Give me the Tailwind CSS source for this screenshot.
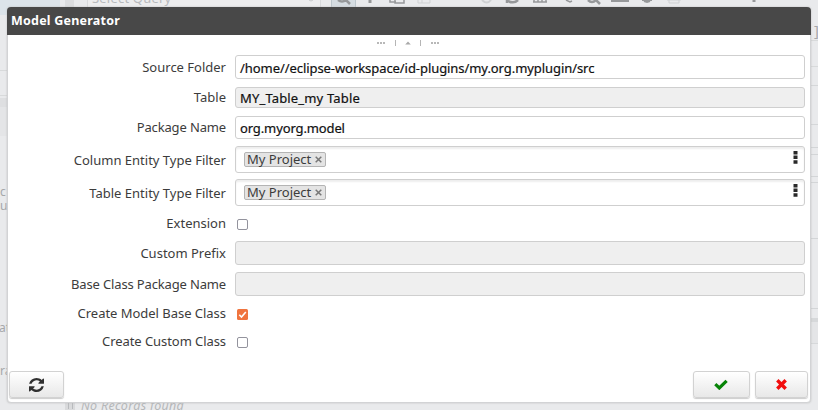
<!DOCTYPE html>
<html lang="en">
<head>
<meta charset="utf-8">
<title>Model Generator</title>
<script src="https://cdn.jsdelivr.net/npm/@tailwindcss/browser@4"></script>
</head>
<body class="relative h-[410px] w-[818px] overflow-hidden bg-[#e9eaec] font-['Noto_Sans','Open_Sans',sans-serif] text-[13px] text-[#3c3c3c]">
<!-- dimmed application behind the dialog -->
<div class="absolute inset-0 text-[#a5a7aa]" aria-hidden="true">
  <div class="absolute left-0 top-0 h-[15px] w-[60px] bg-[#dce4ea]"></div>
  <div class="absolute left-[65px] top-0 h-[15px] w-[9px] bg-[#dcdddf]"></div>
  <div class="absolute -top-[10px] left-[87px] h-[30px] w-[234px] border border-[#d9dadc] bg-[#ededee]"></div>
  <div class="absolute -top-[11px] left-[92px] leading-[18px] tracking-[0.2px] text-[#b8babd]">Select Query</div>
  <div class="absolute -top-px left-[331px] h-[12px] w-[25px] border border-[#bcc6cc] bg-[#d5dce1]"></div>
  <svg class="absolute left-0 top-0 h-[8px] w-[818px]" viewBox="0 0 818 8" fill="none" stroke="#96989a" stroke-width="2">
    <path d="M309 0l2 1 2-1" stroke="#c8cacc" stroke-width="1"/>
    <path d="M338 0q4 3 8 0M346 0l4 4" stroke-width="2.5"/>
    <path d="M370 0v3" stroke-width="3"/>
    <path d="M390 0v2h6M395 0v3h9V0" stroke-width="1.5"/>
    <path d="M418 0v3h12V0M422 0v3" stroke="#cfd1d3" stroke-width="1"/>
    <path d="M482 0q5 5 9 0" stroke="#cfd1d3"/>
    <path d="M507 3V0M508 1q6 3 10-1" stroke-width="2.5"/>
    <path d="M533 2h14M534 0v2M538 0v2M542 0v2M546 0v2" stroke-width="1.5"/>
    <path d="M566 0l4 2 2-1" stroke-width="1.5"/>
    <path d="M588 0q4 4 8 0M596 0l4 4" stroke-width="2.5"/>
    <path d="M612 0v1h16V0" stroke-width="2"/>
    <path d="M642 0h10M644 1l3 1 3-1" stroke-width="2"/>
    <path d="M667 0h14M669 0v3h10V0" stroke="#cfd1d3" stroke-width="1"/>
    <path d="M754 0v2" stroke-width="3"/>
  </svg>
  <div class="absolute left-0 top-[70px] h-[26px] w-[10px] border-y border-[#d8dadb]"></div>
  <div class="absolute left-0 top-[98px] h-[9px] w-[10px] bg-[#dedfe1]"></div>
  <div class="absolute left-0 top-[107px] h-[29px] w-[10px] bg-[#e4e5e7]"></div>
  <div class="absolute left-0 top-[185px] text-[12px] leading-[14px]">c</div>
  <div class="absolute -left-[3px] top-[199px] text-[12px] leading-[14px]">lu</div>
  <div class="absolute -left-px top-[320px] text-[12px] leading-[16px]">at</div>
  <div class="absolute left-0 top-[363px] text-[12px] leading-[16px]">ra</div>
  <div class="absolute left-[814px] top-[20px] text-[15px] leading-[20px]">]</div>
  <div class="absolute left-[808px] top-[40px] h-[27px] w-[10px] border-y border-[#d8dadb]"></div>
  <div class="absolute left-[808px] top-[85px] h-[40px] w-[10px] border-b border-t border-[#d5d7d9]"></div>
  <div class="absolute left-[808px] top-[147px] h-[8px] w-[10px] border-y border-[#d3d5d7]"></div>
  <div class="absolute left-[808px] top-[176px] h-[7px] w-[10px] border-y border-[#d3d5d7]"></div>
  <div class="absolute left-[808px] top-[238px] h-[71px] w-[10px] border-y border-[#d3d5d7]"></div>
  <div class="absolute left-[808px] top-[318px] h-[26px] w-[10px] border-b border-t-4 border-[#d6d8da] bg-[#e4e5e7]"></div>
  <div class="absolute left-[65px] top-[402px] h-[8px] w-[10px] bg-[#d9dadc]"></div>
  <div class="absolute left-[68px] top-[403px] h-[6px] w-[5px] border-x border-[#b8babd]"></div>
  <div class="absolute left-[81px] top-[397px] whitespace-nowrap text-[12.5px] italic leading-[18px] tracking-[0.28px] text-[#b5b7b9]">No Records found</div>
</div>

<main class="absolute left-[7px] top-[7px] flex h-[396px] w-[804px] flex-col rounded-[4px] border border-[#d2d3d5] bg-white shadow-[0_0_2px_#bbb]">
  <header class="-mx-px -mt-px flex h-[28px] shrink-0 items-center rounded-t-[4px] bg-[#484848] pl-1 pt-px text-[12.5px] font-bold text-white"><span class="tracking-[0.22px]">Model Generator</span></header>
  <div class="flex h-[16px] shrink-0 items-center justify-center gap-[13px] pr-[3px]">
    <svg class="h-2 w-2" viewBox="0 0 8 8" fill="#b8b8b8"><path d="M0 3h2v2H0zM3 3h2v2H3zM6 3h2v2H6z"/></svg>
    <i class="-ml-[3px] h-[6px] w-px bg-[#b5b5b5]"></i>
    <svg class="-mx-[5px] h-2 w-2" viewBox="0 0 8 8" fill="#a8a8a8"><path d="M1.200 5.500L4 2.500l2.800 3z"/></svg>
    <i class="h-[6px] w-px bg-[#b5b5b5]"></i>
    <svg class="-ml-[3px] h-2 w-2" viewBox="0 0 8 8" fill="#b8b8b8"><path d="M0 3h2v2H0zM3 3h2v2H3zM6 3h2v2H6z"/></svg>
  </div>
  <form class="flex flex-1 flex-col pr-[5px] whitespace-nowrap">
    <div class="mt-[4px] flex h-6 items-center">
      <label class="w-[218px] pt-[2px] text-right">Source Folder</label>
      <div class="ml-[9px] flex h-full flex-1 items-center rounded-[3px] border border-[#cfcfcf] px-1 pt-[3px] text-[#111] [-webkit-text-stroke:0.2px_#111]"><span class="tracking-[-0.065px]">/home//eclipse-workspace/id-plugins/my.org.myplugin/src</span></div>
    </div>
    <div class="mt-[8px] flex h-[21px] items-center">
      <label class="w-[218px] text-right">Table</label>
      <div class="ml-[9px] flex h-full flex-1 items-center rounded-[3px] border border-[#cfcfcf] bg-[#efefef] px-1 pt-[2px] text-[#111] [-webkit-text-stroke:0.2px_#111]"><span class="tracking-[0.16px]">MY_Table_my Table</span></div>
    </div>
    <div class="mt-[8px] flex h-[23px] items-center">
      <label class="w-[218px] pt-px text-right tracking-[-0.14px]">Package Name</label>
      <div class="ml-[9px] flex h-full flex-1 items-center rounded-[3px] border border-[#cfcfcf] px-1 pt-[2px] text-[#111] [-webkit-text-stroke:0.2px_#111]"><span class="tracking-[-0.12px]">org.myorg.model</span></div>
    </div>
    <div class="mt-[7px] flex h-[27px] items-center">
      <label class="w-[218px] pt-[2px] text-right">Column Entity Type Filter</label>
      <div class="ml-[9px] flex h-full flex-1 items-start justify-between rounded-[3px] border border-[#cfcfcf] pl-2 pr-[6px] pt-[5px] shadow-[inset_0_2px_2px_#eee]">
        <span class="flex h-[15px] w-[82px] items-center justify-between rounded-[2px] border border-[#b4b4b4] bg-[#e4e4e4] pl-[2px] pr-[3px]"><span class="pt-px">My Project</span><svg class="h-[7px] w-[7px]" viewBox="0 0 7 7" stroke="#777" stroke-width="1.500"><path d="M.7.7l5.600 5.600M6.300.7L.7 6.300"/></svg></span>
        <svg class="-mt-px h-[13px] w-[5px]" viewBox="0 0 5 13" fill="#292929"><path d="M.5 0h4v3.500h-4zM.5 4.600h4v3.500h-4zM.5 9.200h4v3.500h-4z"/></svg>
      </div>
    </div>
    <div class="mt-[6px] flex h-[27px] items-center">
      <label class="w-[218px] pt-[2px] text-right">Table Entity Type Filter</label>
      <div class="ml-[9px] flex h-full flex-1 items-start justify-between rounded-[3px] border border-[#cfcfcf] pl-2 pr-[6px] pt-[5px] shadow-[inset_0_2px_2px_#eee]">
        <span class="flex h-[15px] w-[82px] items-center justify-between rounded-[2px] border border-[#b4b4b4] bg-[#e4e4e4] pl-[2px] pr-[3px]"><span class="pt-px">My Project</span><svg class="h-[7px] w-[7px]" viewBox="0 0 7 7" stroke="#777" stroke-width="1.500"><path d="M.7.7l5.600 5.600M6.300.7L.7 6.300"/></svg></span>
        <svg class="-mt-px h-[13px] w-[5px]" viewBox="0 0 5 13" fill="#292929"><path d="M.5 0h4v3.500h-4zM.5 4.600h4v3.500h-4zM.5 9.200h4v3.500h-4z"/></svg>
      </div>
    </div>
    <div class="mt-[8px] flex h-5 items-center">
      <label class="w-[218px] text-right">Extension</label>
      <span class="ml-[11px] h-[11px] w-[11px] rounded-[2px] border border-[#93939d] bg-white"></span>
    </div>
    <div class="mt-[7px] flex h-6 items-center">
      <label class="w-[218px] pt-px text-right">Custom Prefix</label>
      <div class="ml-[9px] h-full flex-1 rounded-[3px] border border-[#cfcfcf] bg-[#efefef]"></div>
    </div>
    <div class="mt-[7px] flex h-6 items-center">
      <label class="w-[218px] pt-[2px] text-right tracking-[-0.15px]">Base Class Package Name</label>
      <div class="ml-[9px] h-full flex-1 rounded-[3px] border border-[#cfcfcf] bg-[#efefef]"></div>
    </div>
    <div class="mt-[8px] flex h-5 items-center">
      <label class="w-[218px] text-right tracking-[-0.03px]">Create Model Base Class</label>
      <svg class="ml-[11px] h-[11px] w-[11px]" viewBox="0 0 11 11"><rect width="11" height="11" rx="1.500" fill="#f0743e"/><path d="M2.300 5.800l2.200 2.200L8.800 3" fill="none" stroke="#fff" stroke-width="1.600"/></svg>
    </div>
    <div class="mt-[8px] flex h-5 items-center">
      <label class="w-[218px] text-right tracking-[-0.07px]">Create Custom Class</label>
      <span class="ml-[11px] h-[11px] w-[11px] rounded-[2px] border border-[#93939d] bg-white"></span>
    </div>
  </form>
  <footer class="flex h-[31px] shrink-0 items-start gap-[5px] pl-px pr-[2px]">
    <button class="mr-auto flex h-[27px] w-[55px] items-center justify-center rounded-[3px] border border-[#d2d2d2] bg-linear-to-b from-white to-[#e8e8e8] shadow-[0_1px_1px_#ccc]" aria-label="Refresh">
      <svg class="h-[14px] w-[15px]" viewBox="0 0 1536 1536" preserveAspectRatio="none" fill="#303030"><path d="M1511 928q0 5-1 7-64 268-268 434.500T764 1536q-146 0-282.500-55T238 1324l-129 129q-19 19-45 19t-45-19-19-45V960q0-26 19-45t45-19h448q26 0 45 19t19 45-19 45l-137 137q71 66 161 102t187 36q134 0 250-65t186-179q11-17 53-117 8-23 30-23h192q13 0 22.500 9.500t9.500 22.500zm25-800v448q0 26-19 45t-45 19h-448q-26 0-45-19t-19-45 19-45l138-138Q969 256 768 256q-134 0-250 65T332 500q-11 17-53 117-8 23-30 23H50q-13 0-22.500-9.500T18 608v-7q65-268 270-434.500T768 0q146 0 284 55.500T1297 212l130-129q19-19 45-19t45 19 19 45z"/></svg>
    </button>
    <button class="flex h-[27px] w-[57px] items-center justify-center rounded-[3px] border border-[#d2d2d2] bg-linear-to-b from-white to-[#e8e8e8] pr-px shadow-[0_1px_1px_#ccc]" aria-label="OK">
      <svg class="h-[11px] w-[14px]" viewBox="0 0 14 11"><path d="M1.300 5.200L5.300 9 12.600 1.800" fill="none" stroke="#078407" stroke-width="3.200"/></svg>
    </button>
    <button class="flex h-[27px] w-[53px] items-center justify-center rounded-[3px] border border-[#d2d2d2] bg-linear-to-b from-white to-[#e8e8e8] pr-px shadow-[0_1px_1px_#ccc]" aria-label="Cancel">
      <svg class="h-[11px] w-[11px]" viewBox="0 0 11 11"><path d="M1.300 1.300l8.400 8.400M9.700 1.300L1.300 9.700" fill="none" stroke="#f20d0d" stroke-width="3.400"/></svg>
    </button>
  </footer>
</main>
</body>
</html>
